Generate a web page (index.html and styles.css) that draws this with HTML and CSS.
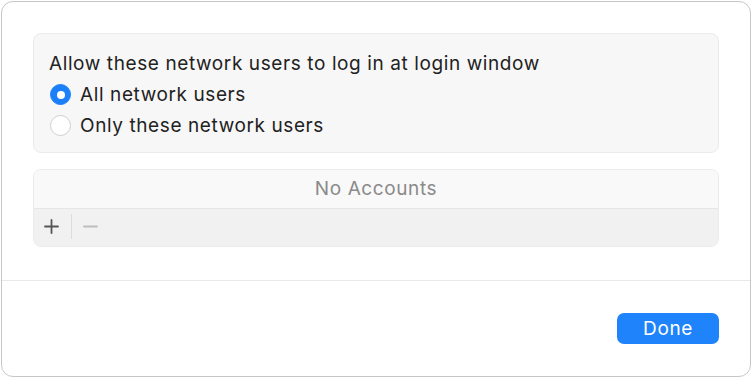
FILE: index.html
```html
<!DOCTYPE html>
<html lang="en">
<head>
  <meta charset="UTF-8">
  <title>Network Users</title>
  <link rel="stylesheet" href="styles.css">
</head>
<body>
  <div class="window">
    <div class="content">
      <div class="card options">
        <div class="title">Allow these network users to log in at login window</div>
        <label class="row"><span class="radio checked"></span>All network users</label>
        <label class="row"><span class="radio"></span>Only these network users</label>
      </div>
      <div class="card list">
        <div class="list-body">No Accounts</div>
        <div class="list-tools">
          <button class="tool add" title="Add">
            <svg width="15" height="15" viewBox="0 0 15 15"><path d="M7.5 1v13M1 7.5h13" stroke="currentColor" stroke-width="1.8" stroke-linecap="round"/></svg>
          </button>
          <span class="tool-sep"></span>
          <button class="tool remove" title="Remove">
            <svg width="15" height="15" viewBox="0 0 15 15"><path d="M1 7.5h13" stroke="currentColor" stroke-width="1.8" stroke-linecap="round"/></svg>
          </button>
        </div>
      </div>
    </div>
    <div class="footer">
      <button class="done">Done</button>
    </div>
  </div>
</body>
</html>
```

FILE: styles.css
```css
body { margin: 0; background: #fff; font-family: "Inter", "Liberation Sans", sans-serif; color: #222; }
.window { box-sizing: border-box; margin: 1px 0 0 1px; width: 750px; height: 376px; border: 1px solid #c6c6c6; border-radius: 12px; display: flex; flex-direction: column; background: #fff; }
.content { flex: 1; padding: 31px 31px 0; display: flex; flex-direction: column; gap: 16px; }
.card { background: #f7f7f7; border: 1px solid #ebebeb; border-radius: 8px; }
.options { padding: 14px 15px 11px; }
.title, .row { height: 31px; line-height: 31px; font-size: 19px; letter-spacing: 0.6px; }
.row { display: flex; align-items: center; }
.radio { box-sizing: border-box; width: 21px; height: 21px; border-radius: 50%; border: 1px solid #cfcfcf; background: #fff; margin: 0 9px 0 1px; display: flex; align-items: center; justify-content: center; }
.radio.checked { background: #1a7ff8; border-color: #1a7ff8; }
.radio.checked::after { content: ""; width: 8px; height: 8px; border-radius: 50%; background: #fff; }
.list { overflow: hidden; }
.list-body { height: 38px; line-height: 38px; text-align: center; font-size: 19px; letter-spacing: 0.6px; color: #8a8a8a; background: #f9f9f9; border-bottom: 1px solid #e6e6e6; }
.list-tools { box-sizing: border-box; height: 37px; background: #f1f1f1; display: flex; align-items: center; padding: 0 0 3px 9px; }
.tool { background: none; border: none; padding: 0; width: 17px; height: 17px; display: flex; align-items: center; justify-content: center; color: #555; cursor: pointer; }
.tool.remove { color: #bdbdbd; margin-left: 10px; }
.tool-sep { width: 1px; height: 25px; background: #dcdcdc; margin-left: 11px; }
.footer { box-sizing: border-box; height: 96px; border-top: 1px solid #e8e8e8; display: flex; align-items: center; justify-content: flex-end; padding-right: 31px; }
.done { width: 102px; height: 31px; border: none; border-radius: 7px; background: #1f83fb; color: #fff; font-family: "Inter", "Liberation Sans", sans-serif; font-size: 19px; letter-spacing: 0.6px; cursor: pointer; }
```
